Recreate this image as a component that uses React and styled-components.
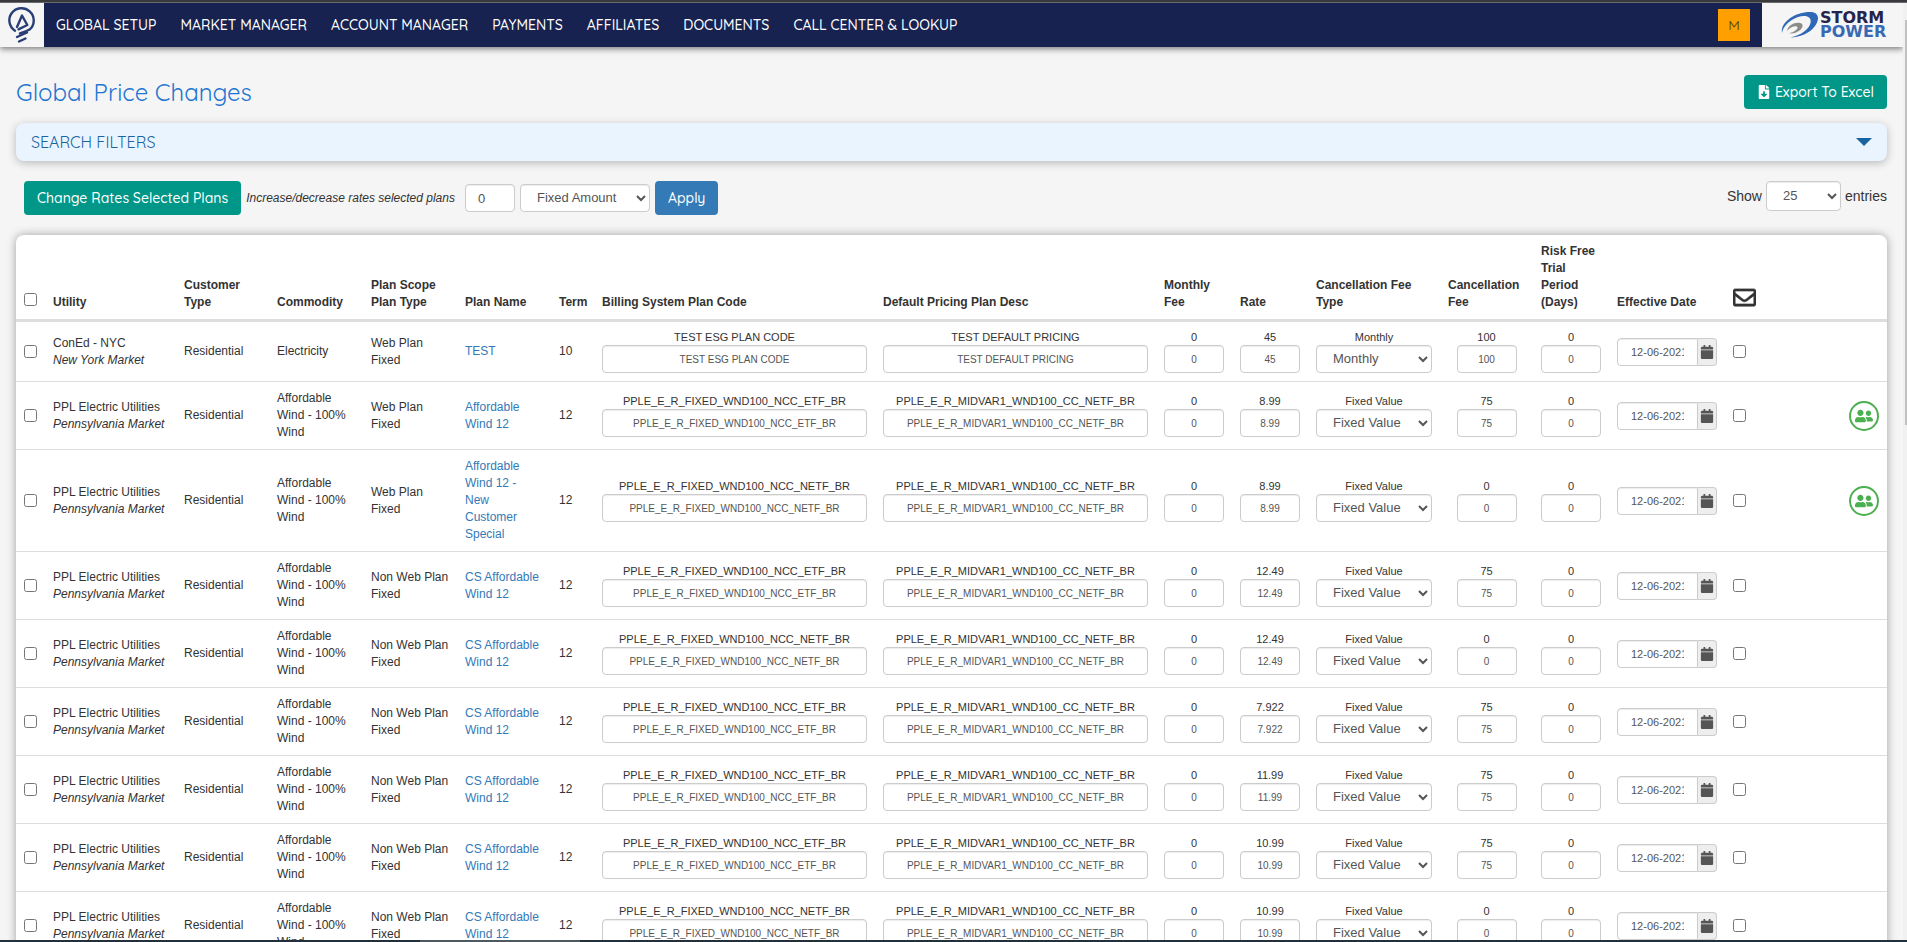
import React from "react";
import styled, { createGlobalStyle, css } from "styled-components";
import {
  FaCalendar,
  FaFileDownload,
  FaRegEnvelope,
  FaUserFriends,
} from "react-icons/fa";

const brandFont = `Quicksand, Lato, "Open Sans", sans-serif`;
const bodyFont = `"Liberation Sans", Arial, sans-serif`;

const GlobalStyle = createGlobalStyle`
  *, *::before, *::after { box-sizing: border-box; }
  body {
    margin: 0;
    background: #f5f5f5;
    color: #333;
    font-family: ${bodyFont};
    font-size: 14px;
    line-height: 20px;
  }
`;

/* ---------- window frame ---------- */

const Window = styled.div`
  display: flex;
  flex-direction: column;
  height: 100vh;
  overflow: hidden;
`;

const TopEdge = styled.div`
  flex: none;
  height: 3px;
  background: #37393c;
  border-bottom: 1px solid #6a6b6d;
`;

const Viewport = styled.div`
  flex: 1;
  min-height: 0;
  display: flex;
  overflow: hidden;
`;

const Page = styled.div`
  flex: 1;
  min-width: 0;
`;

const ScrollTrack = styled.div`
  flex: none;
  width: 4px;
  padding: 17px 0 0 2px;
  background: #f1f1f1;
`;

const ScrollThumb = styled.div`
  height: 44%;
  background: #c1c1c1;
`;

const BottomEdge = styled.div`
  flex: none;
  height: 2px;
  padding-left: 22%;
  background: #22303b;
`;

const BottomTab = styled.div`
  width: 160px;
  height: 2px;
  background: #4d5a62;
`;

/* ---------- navigation ---------- */

const NavBar = styled.header`
  display: flex;
  align-items: stretch;
  height: 44px;
  background: #172250;
  box-shadow: 0 2px 6px rgba(0, 0, 0, 0.5);
`;

const BulbCell = styled.a`
  flex: none;
  width: 44px;
  background: #f5f5f5;
`;

const NavLinks = styled.nav`
  flex: 1;
  display: flex;
  align-items: center;
  gap: 24px;
  padding-left: 12px;
`;

const NavLink = styled.a`
  color: #fff;
  font-family: ${brandFont};
  font-size: 14px;
  font-weight: 500;
  white-space: nowrap;
  text-decoration: none;
`;

const Avatar = styled.button`
  align-self: center;
  width: 32px;
  height: 32px;
  margin-right: 12px;
  padding: 0;
  border: 0;
  background: #ffa000;
  color: #4a3a10;
  font-family: ${brandFont};
  font-size: 14px;
`;

const CompanyCell = styled.div`
  flex: none;
  display: flex;
  align-items: center;
  gap: 2px;
  width: 141px;
  padding-left: 19px;
  background: #f5f5f5;
`;

const CompanyName = styled.div`
  color: #26234a;
  font-family: "DejaVu Sans", sans-serif;
  font-size: 16px;
  font-weight: 700;
  line-height: 14px;
`;

const CompanyAccent = styled.div`
  color: #3a69b4;
`;

/* ---------- page header ---------- */

const Main = styled.main`
  padding: 28px 16px 0;
`;

const TitleRow = styled.div`
  display: flex;
  align-items: center;
  justify-content: space-between;
`;

const Title = styled.h1`
  margin: 0;
  color: #1f76d2;
  font-family: ${brandFont};
  font-size: 24px;
  font-weight: 400;
  line-height: 34px;
`;

const Button = styled.button`
  display: flex;
  align-items: center;
  gap: 4px;
  height: 34px;
  padding: 0 13px;
  border: 0;
  border-radius: 4px;
  background: ${(p) => (p.$blue ? "#337ab7" : "#009688")};
  color: #fff;
  font-family: ${brandFont};
  font-size: 14px;
  font-weight: 500;
  white-space: nowrap;
`;

const FilterPanel = styled.button`
  display: flex;
  align-items: center;
  justify-content: space-between;
  width: 100%;
  height: 38px;
  margin-top: 14px;
  padding: 0 15px;
  border: 0;
  border-radius: 8px;
  background: #eaf4ff;
  box-shadow: 0 2px 8px rgba(0, 0, 0, 0.25);
  color: #1a659f;
  font-family: ${brandFont};
  font-size: 16px;
`;

/* ---------- form controls ---------- */

const control = css`
  display: block;
  height: 28px;
  border: 1px solid #ccc;
  border-radius: 4px;
  background: #fff;
  box-shadow: inset 0 1px 1px rgba(0, 0, 0, 0.075);
  color: #555;
  font-family: ${bodyFont};
`;

const TextBox = styled.input`
  ${control}
  width: ${(p) => p.$width || "100%"};
  margin: 0 auto;
  padding: 0 12px;
  font-size: ${(p) => p.$size || 10}px;
  text-align: ${(p) => (p.$left ? "left" : "center")};
`;

const Select = styled.select`
  ${control}
  width: ${(p) => p.$width || "100%"};
  height: ${(p) => (p.$tall ? 30 : 28)}px;
  padding: 0 12px 1px;
  font-size: 13px;
`;

const Check = styled.input`
  display: block;
  width: 13px;
  height: 13px;
  margin: 0;
`;

const HeadCheck = styled(Check)`
  margin-bottom: 5px;
`;

const Toolbar = styled.div`
  display: flex;
  align-items: flex-start;
  justify-content: space-between;
  margin-top: 20px;
  padding-left: 8px;
`;

const RateTools = styled.div`
  display: flex;
  align-items: center;
  gap: 5px;
`;

const RateHint = styled.label`
  padding-right: 5px;
  font-size: 12px;
  font-style: italic;
  white-space: nowrap;
`;

const PageSize = styled.label`
  display: flex;
  align-items: center;
  gap: 4px;
`;

/* ---------- plans table ---------- */

const Card = styled.section`
  margin-top: 20px;
  border-radius: 8px;
  background: #fff;
  box-shadow: 0 0 10px rgba(0, 0, 0, 0.35);
`;

const Table = styled.table`
  width: 100%;
  table-layout: fixed;
  border-collapse: separate;
  border-spacing: 0;
  font-size: 12px;
  line-height: 17px;
`;

const Col = styled.col`
  width: ${(p) => p.$width}px;
`;

const HeadCell = styled.th`
  padding: 8px;
  border-bottom: 3px solid #ddd;
  text-align: left;
  vertical-align: bottom;
`;

const Cell = styled.td`
  padding: 8px;
  border-bottom: 1px solid #ddd;
  vertical-align: middle;
`;

const Market = styled.em`
  display: block;
`;

const PlanLink = styled.a`
  color: #337ab7;
  text-decoration: none;
`;

const FieldLabel = styled.label`
  display: block;
  font-size: 11px;
  line-height: 15px;
  text-align: center;
`;

const DateGroup = styled.div`
  display: flex;
`;

const DateBox = styled.input`
  ${control}
  flex: 1;
  min-width: 0;
  padding: 0 13px;
  border-radius: 4px 0 0 4px;
  font-size: 11px;
`;

const DateButton = styled.button`
  display: flex;
  align-items: center;
  justify-content: center;
  width: 19px;
  height: 28px;
  padding: 0;
  border: 1px solid #ccc;
  border-left: 0;
  border-radius: 0 4px 4px 0;
  background: #eee;
  color: #555;
`;

const Envelope = styled(FaRegEnvelope)`
  display: inline-block;
  vertical-align: -3px;
  stroke: currentColor;
  stroke-width: 14;
`;

const GroupButton = styled.button`
  display: flex;
  align-items: center;
  justify-content: center;
  width: 30px;
  height: 30px;
  padding: 0;
  border: 2px solid #4caf50;
  border-radius: 50%;
  background: #fff;
  color: #4caf50;
`;

/* ---------- logos ---------- */

const BulbLogo = () => (
  <svg width="44" height="44" viewBox="0 0 44 44" fill="none" stroke="#2a3e76" strokeWidth="2.4" strokeLinecap="round" strokeLinejoin="round">
    <path d="M15 27.700 A12.200 12.200 0 1 1 30 26.200 Q26 28.500 20 30.500" />
    <path d="M17 24 L22 12.500 L27.300 22 L18.500 26.300" />
    <path d="M17 34 L27 29.500 M19 38.500 L25.500 35.500" />
  </svg>
);

const SwirlLogo = () => (
  <svg width="37" height="28" viewBox="0 0 37 28">
    <path
      d="M1 22 C-1 12 13 1 29 1 C38 1 39 8 34 15 C29 22 20 26 9 26.500 C21 24 28 18 29.500 12 C31 5 24 4 17 6 C9 9 2 15 1 22 Z"
      fill="#2f68b5"
    />
    <path d="M6 20 C7 14 14 11 19 12 C24 13 21 19 16 21 C12 23 9 22.500 8 22 C13 21.500 17 18 16.500 16 C15 14 9 16 6 20 Z" fill="#8b8b88" />
  </svg>
);

const PanelArrow = () => (
  <svg width="16" height="8" viewBox="0 0 16 8">
    <path d="M0 0 H16 L8 8 Z" fill="#1a659f" />
  </svg>
);

/* ---------- data ---------- */

const navItems = [
  "GLOBAL SETUP",
  "MARKET MANAGER",
  "ACCOUNT MANAGER",
  "PAYMENTS",
  "AFFILIATES",
  "DOCUMENTS",
  "CALL CENTER & LOOKUP",
];

const columnWidths = [29, 131, 93, 94, 94, 94, 43, 281, 281, 76, 76, 132, 93, 76, 116, 116, 46];

const ppl = {
  utility: "PPL Electric Utilities",
  market: "Pennsylvania Market",
  commodity: "Affordable Wind - 100% Wind",
  term: 12,
  pricing: "PPLE_E_R_MIDVAR1_WND100_CC_NETF_BR",
  feeType: "Fixed Value",
};
const etf = { code: "PPLE_E_R_FIXED_WND100_NCC_ETF_BR", fee: "75" };
const noEtf = { code: "PPLE_E_R_FIXED_WND100_NCC_NETF_BR", fee: "0" };
const csPlan = { ...ppl, scope: "Non Web Plan", name: "CS Affordable Wind 12" };

const plans = [
  {
    utility: "ConEd - NYC",
    market: "New York Market",
    commodity: "Electricity",
    scope: "Web Plan",
    name: "TEST",
    term: 10,
    code: "TEST ESG PLAN CODE",
    pricing: "TEST DEFAULT PRICING",
    rate: "45",
    feeType: "Monthly",
    fee: "100",
  },
  { ...ppl, ...etf, scope: "Web Plan", name: "Affordable Wind 12", rate: "8.99", group: true },
  { ...ppl, ...noEtf, scope: "Web Plan", name: "Affordable Wind 12 - New Customer Special", rate: "8.99", group: true },
  { ...csPlan, ...etf, rate: "12.49" },
  { ...csPlan, ...noEtf, rate: "12.49" },
  { ...csPlan, ...etf, rate: "7.922" },
  { ...csPlan, ...etf, rate: "11.99" },
  { ...csPlan, ...etf, rate: "10.99" },
  { ...csPlan, ...noEtf, rate: "10.99" },
];

function Field({ id, value, width }) {
  return (
    <>
      <FieldLabel htmlFor={id}>{value}</FieldLabel>
      <TextBox id={id} defaultValue={value} $width={width} />
    </>
  );
}

function PlanRow({ plan, index }) {
  const id = (name) => `${name}-${index}`;
  return (
    <tr>
      <Cell><Check type="checkbox" aria-label="Select plan" /></Cell>
      <Cell>{plan.utility}<Market>{plan.market}</Market></Cell>
      <Cell>Residential</Cell>
      <Cell>{plan.commodity}</Cell>
      <Cell>{plan.scope}<br />Fixed</Cell>
      <Cell><PlanLink href="#plan">{plan.name}</PlanLink></Cell>
      <Cell>{plan.term}</Cell>
      <Cell><Field id={id("code")} value={plan.code} /></Cell>
      <Cell><Field id={id("pricing")} value={plan.pricing} /></Cell>
      <Cell><Field id={id("monthly")} value="0" /></Cell>
      <Cell><Field id={id("rate")} value={plan.rate} /></Cell>
      <Cell>
        <FieldLabel htmlFor={id("type")}>{plan.feeType}</FieldLabel>
        <Select id={id("type")} defaultValue={plan.feeType}>
          <option>Fixed Value</option>
          <option>Monthly</option>
        </Select>
      </Cell>
      <Cell><Field id={id("fee")} value={plan.fee} width="60px" /></Cell>
      <Cell><Field id={id("trial")} value="0" /></Cell>
      <Cell>
        <DateGroup>
          <DateBox defaultValue="12-06-2021" aria-label="Effective date" />
          <DateButton aria-label="Open calendar"><FaCalendar size={14} /></DateButton>
        </DateGroup>
      </Cell>
      <Cell><Check type="checkbox" aria-label="Notify by mail" /></Cell>
      <Cell>
        {plan.group && (
          <GroupButton aria-label="Customer group"><FaUserFriends size={18} /></GroupButton>
        )}
      </Cell>
    </tr>
  );
}

export default function App() {
  return (
    <Window>
      <GlobalStyle />
      <TopEdge />
      <Viewport>
        <Page>
          <NavBar>
            <BulbCell href="#home" aria-label="Home"><BulbLogo /></BulbCell>
            <NavLinks>
              {navItems.map((item) => <NavLink key={item} href="#menu">{item}</NavLink>)}
            </NavLinks>
            <Avatar>M</Avatar>
            <CompanyCell>
              <SwirlLogo />
              <CompanyName>STORM<CompanyAccent>POWER</CompanyAccent></CompanyName>
            </CompanyCell>
          </NavBar>
          <Main>
            <TitleRow>
              <Title>Global Price Changes</Title>
              <Button><FaFileDownload size={14} />Export To Excel</Button>
            </TitleRow>
            <FilterPanel>SEARCH FILTERS<PanelArrow /></FilterPanel>
            <Toolbar>
              <RateTools>
                <Button>Change Rates Selected Plans</Button>
                <RateHint htmlFor="rate-change">Increase/decrease rates selected plans</RateHint>
                <TextBox id="rate-change" defaultValue="0" $width="50px" $size={13} $left />
                <Select aria-label="Change type" $width="130px">
                  <option>Fixed Amount</option>
                  <option>Percentage</option>
                </Select>
                <Button $blue>Apply</Button>
              </RateTools>
              <PageSize>
                Show
                <Select $width="75px" $tall defaultValue="25">
                  <option>10</option>
                  <option>25</option>
                  <option>50</option>
                </Select>
                entries
              </PageSize>
            </Toolbar>
            <Card>
              <Table>
                <colgroup>
                  {columnWidths.map((width, i) => <Col key={i} $width={width} />)}
                </colgroup>
                <thead>
                  <tr>
                    <HeadCell><HeadCheck type="checkbox" aria-label="Select all plans" /></HeadCell>
                    <HeadCell>Utility</HeadCell>
                    <HeadCell>Customer Type</HeadCell>
                    <HeadCell>Commodity</HeadCell>
                    <HeadCell>Plan Scope<br />Plan Type</HeadCell>
                    <HeadCell>Plan Name</HeadCell>
                    <HeadCell>Term</HeadCell>
                    <HeadCell>Billing System Plan Code</HeadCell>
                    <HeadCell>Default Pricing Plan Desc</HeadCell>
                    <HeadCell>Monthly Fee</HeadCell>
                    <HeadCell>Rate</HeadCell>
                    <HeadCell>Cancellation Fee Type</HeadCell>
                    <HeadCell>Cancellation Fee</HeadCell>
                    <HeadCell>Risk Free Trial Period (Days)</HeadCell>
                    <HeadCell>Effective Date</HeadCell>
                    <HeadCell><Envelope size={23} /></HeadCell>
                    <HeadCell />
                  </tr>
                </thead>
                <tbody>
                  {plans.map((plan, i) => <PlanRow key={i} plan={plan} index={i} />)}
                </tbody>
              </Table>
            </Card>
          </Main>
        </Page>
        <ScrollTrack><ScrollThumb /></ScrollTrack>
      </Viewport>
      <BottomEdge><BottomTab /></BottomEdge>
    </Window>
  );
}
